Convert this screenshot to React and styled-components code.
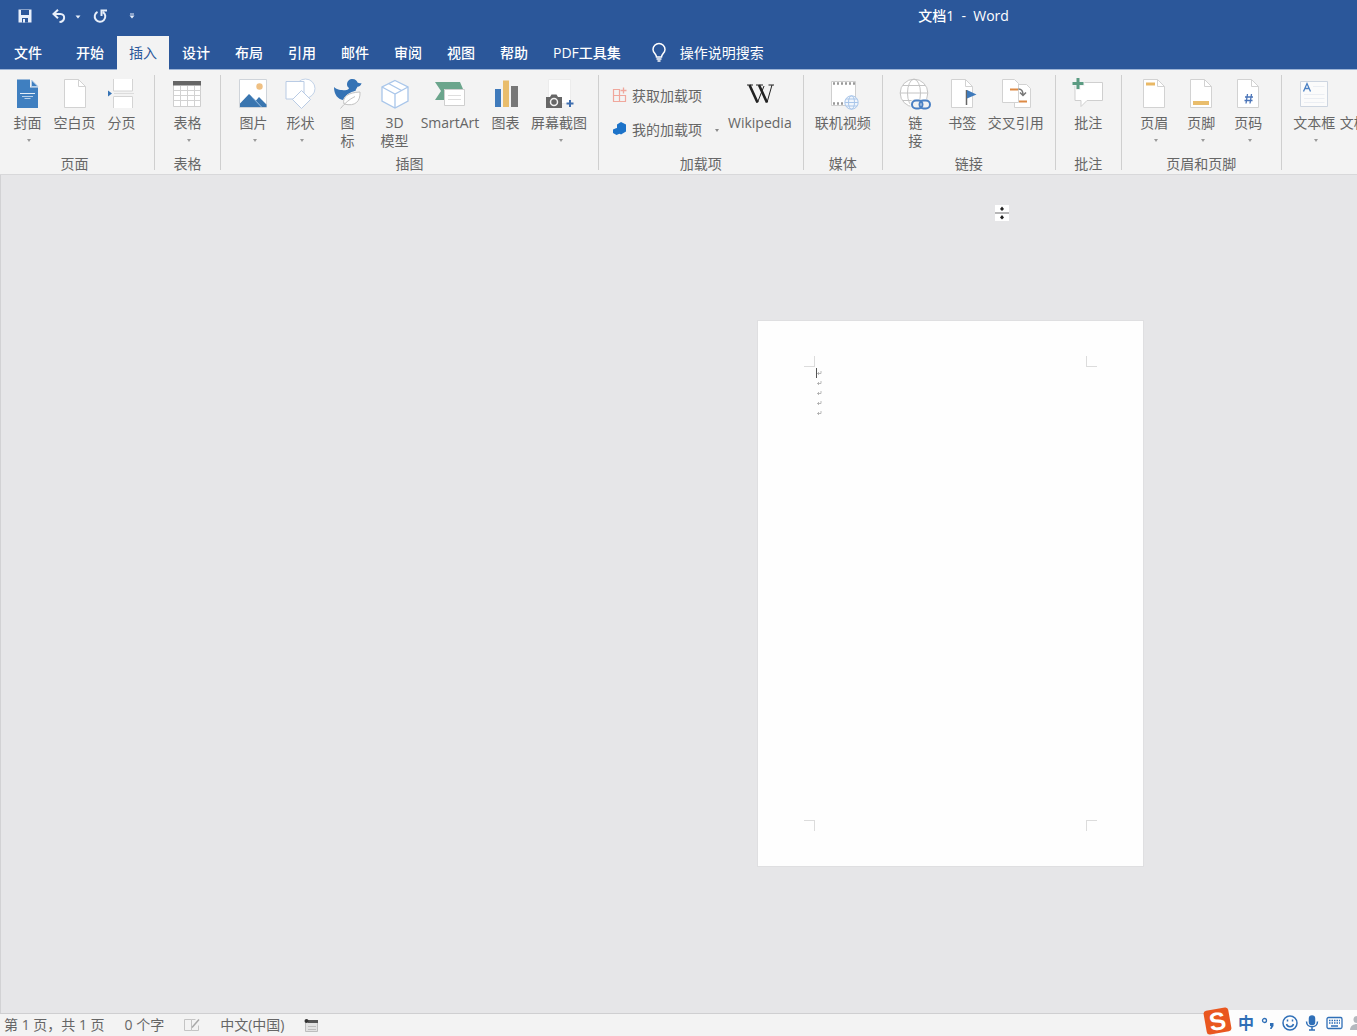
import React from "react";
import styled, { createGlobalStyle, css } from "styled-components";

const GlobalStyle = createGlobalStyle`
  * {
    box-sizing: border-box;
  }
  body {
    margin: 0;
    font-family: "Open Sans", "Noto Sans CJK SC", sans-serif;
    font-size: 14px;
    color: #666;
  }
  button {
    border: 0;
    padding: 0;
    background: none;
    font: inherit;
    color: inherit;
    cursor: pointer;
  }
  svg {
    display: block;
    flex: none;
  }
`;

const Window = styled.div`
  min-height: 100vh;
  display: flex;
  flex-direction: column;
  overflow: hidden;
  position: relative;
`;

/* ---------- title bar and tabs ---------- */

const TitleBar = styled.header`
  height: 36px;
  display: flex;
  align-items: center;
  padding: 0 0 5px 18px;
  background: #2b579a;
  color: #fff;
`;

const QuickAccess = styled.div`
  display: flex;
  align-items: center;
`;

const QuickButton = styled.button`
  margin-right: ${(props) => props.$gap}px;
`;

const DocTitle = styled.div`
  margin-left: auto;
  margin-right: 26%;
  line-height: 20px;
  font-weight: 500;
  white-space: pre;
`;

const TabBar = styled.nav`
  height: 34px;
  display: flex;
  background: #2b579a;
  border-bottom: 1px solid #9db4d6;
  color: #fff;
`;

const Tab = styled.button`
  height: 34px;
  padding: 0 12px 2px;
  margin-right: 1px;
  font-weight: 500;
  white-space: nowrap;

  ${(props) =>
    props.$file &&
    css`
      padding: 0 14px 2px;
      margin-right: 8px;
    `}

  ${(props) =>
    props.$active &&
    css`
      background: #f3f3f3;
      color: #2b579a;
      font-weight: 400;
    `}
`;

const TellMe = styled.button`
  display: flex;
  align-items: center;
  gap: 14px;
  margin-left: 18px;
  padding-bottom: 2px;
  white-space: nowrap;
`;

/* ---------- ribbon ---------- */

const Ribbon = styled.section`
  display: flex;
  padding: 5px 0 4px;
  background: #f3f3f3;
  border-bottom: 1px solid #d8d8da;
  overflow: hidden;
`;

const Group = styled.div`
  flex: none;
  display: flex;
  flex-direction: column;
  justify-content: space-between;
  padding: 3px 9px 0;
  border-right: 1px solid #cfcfcf;

  &:first-child {
    padding-left: 4px;
  }
`;

const GroupItems = styled.div`
  display: flex;
  align-items: flex-start;
`;

const GroupName = styled.div`
  height: 12px;
  line-height: 12px;
  text-align: center;
`;

const Tool = styled.button`
  min-width: ${(props) => (props.$wide ? 64 : 47)}px;
  height: 80px;
  padding: 0 2px;
  display: flex;
  flex-direction: column;
  align-items: center;
`;

const ToolLabel = styled.span`
  margin-top: 4px;
  line-height: 18px;
  white-space: pre;
`;

const DropMark = styled.span`
  margin: 7px 0 0 3px;
  border: 2px solid transparent;
  border-top: 3px solid #9a9a9a;
`;

const AddinList = styled.div`
  display: flex;
  flex-direction: column;
  padding-right: 7px;
`;

const Addin = styled.button`
  height: 34px;
  padding-left: 4px;
  display: flex;
  align-items: center;
  gap: 4px;
`;

const AddinMark = styled.span`
  margin: 4px 0 0 9px;
  border: 2px solid transparent;
  border-top: 3px solid #8a8a8a;
`;

/* ---------- document ---------- */

const Canvas = styled.main`
  flex: 1;
  display: flex;
  justify-content: flex-end;
  align-items: flex-start;
  padding: 146px 214px 40px 0;
  background: #e6e6e8;
  border-left: 1px solid #d2d2d4;
  position: relative;
`;

const Page = styled.article`
  width: 385px;
  height: 545px;
  padding: 46px 57px;
  background: #fefefe;
  outline: 1px solid #dfdfe1;
`;

const TextArea = styled.div`
  height: 100%;
  position: relative;
  padding: 1px;
`;

const Corner = styled.span`
  position: absolute;
  width: 11px;
  height: 11px;
  border: 0 solid #dcdcdc;
  ${(props) => props.$v}: -11px;
  ${(props) => props.$h}: -11px;
  border-${(props) => (props.$v === "top" ? "bottom" : "top")}-width: 1px;
  border-${(props) => (props.$h === "left" ? "right" : "left")}-width: 1px;
`;

const Paragraph = styled.div`
  height: 10px;
  display: flex;
  align-items: center;
  border-left: 1px solid ${(props) => (props.$caret ? "#555" : "transparent")};
`;

const Pointer = styled.svg`
  position: absolute;
  top: 29px;
  right: 347px;
`;

/* ---------- status bar ---------- */

const StatusBar = styled.footer`
  height: 23px;
  display: flex;
  align-items: center;
  padding-left: 4px;
  gap: 20px;
  background: #f3f3f3;
  border-top: 1px solid #cfcfd1;
  white-space: nowrap;
  line-height: 20px;
`;

const ImeBar = styled.div`
  position: absolute;
  right: 0;
  bottom: 0;
  width: 142px;
  height: 26px;
  padding-left: 23px;
  display: flex;
  align-items: center;
  gap: 7px;
  background: #fdfdfd;
  color: #2f6fb7;
  overflow: hidden;
`;

const ImeLang = styled.button`
  font-size: 16px;
  font-weight: 700;
  line-height: 20px;
`;

const ImeLogo = styled.div`
  position: absolute;
  right: 127px;
  bottom: 3px;
  width: 25px;
  height: 24px;
  border-radius: 3px;
  background: #e9571f;
  color: #fff;
  font: 700 25px/24px "Liberation Sans", sans-serif;
  text-align: center;
  transform: rotate(-10deg);
  z-index: 1;
`;

/* ---------- icons ---------- */

const Icon = ({ children }) => (
  <svg width="32" height="32" viewBox="0 0 32 32" fill="none">
    {children}
  </svg>
);

const Sheet = ({ children }) => (
  <Icon>
    <path d="M5.500 1.500h14l7 7v21h-21z" fill="#fff" stroke="#d2d2d2" />
    <path d="M19.500 1.500v7h7" stroke="#d2d2d2" />
    {children}
  </Icon>
);

const CoverIcon = () => (
  <Icon>
    <path d="M5 1.500h13v8h8V30H5z" fill="#3f7fc0" />
    <path d="M19.500 2v6.500H26z" fill="#3f7fc0" stroke="#b9d1ea" />
    <path d="M8 15.500h15" stroke="#e4eef8" />
    <path d="M10 18.500h11M12.500 20.500h6" stroke="#b9d1ea" />
  </Icon>
);

const BreakIcon = () => (
  <Icon>
    <path d="M7 1h20v12H7z" fill="#fff" />
    <path d="M7.500 1v12h19V1" stroke="#d4d4d4" />
    <path d="M7 18h20v12H7z" fill="#fff" />
    <path d="M7.500 30V18.500h19V30" stroke="#d4d4d4" />
    <path d="M2 12.500l4 3-4 3z" fill="#3573b5" />
    <path d="M8 15.500h20" stroke="#dcdcdc" />
  </Icon>
);

const TableIcon = () => (
  <Icon>
    <path d="M1.500 3.500h27v25h-27z" fill="#fff" stroke="#cfcfcf" />
    <path d="M1 3h28v4.500H1z" fill="#666" />
    <path
      d="M1.500 12.500h27M1.500 17.500h27M1.500 22.500h27M8.500 8v20M15.500 8v20M22.500 8v20"
      stroke="#d2d2d2"
    />
  </Icon>
);

const PictureIcon = () => (
  <Icon>
    <path d="M1.500 1.500h27v28h-27z" fill="#fff" stroke="#cfd4da" />
    <circle cx="21.500" cy="8.500" r="3.200" fill="#efc083" />
    <path d="M2 29v-3.500L11 16l7 6.500 3-3.500 7.500 7.500V29z" fill="#3a76b0" />
    <path d="M13.500 18.500l10 10.500" stroke="#9cc0e2" />
  </Icon>
);

const ShapesIcon = () => (
  <Icon>
    <circle cx="20.500" cy="10.500" r="9.500" fill="#fff" stroke="#c3d3e8" />
    <path d="M1 3.500h18V21H1z" fill="#fff" stroke="#b9cbe4" />
    <path d="M16.500 12.500l9 9-9 9-9-9z" fill="#fff" stroke="#b9cbe4" />
  </Icon>
);

const DuckIcon = () => (
  <Icon>
    <path
      d="M15 6.500C15 3 17.500 1 20.500 1S25 3 25.500 4.500c1.500.8 2.800.8 4 .5-.5 2.500-2 3.700-4 3.800-.8 1.700-2 2.700-2 4.200C22 13 14 15 11 22 6 21 2 17 2 9c3 3 7 3.200 11 3.200 2.500 0 4-1.200 4-2.200-1.300-.7-2-2-2-3.500z"
      fill="#3573b5"
    />
    <path
      d="M12 26c-2-7 4-11.500 16-12 .5 9-4.500 15-16 12z"
      fill="#fff"
      stroke="#c2c2c2"
    />
    <path d="M8.500 30.500C13 25 17 21.500 23 18.500" stroke="#c2c2c2" />
  </Icon>
);

const CubeIcon = () => (
  <Icon>
    <path
      d="M16 2.500l13 6.500v14l-13 7-13-7V9z"
      fill="#fff"
      stroke="#a9c6ea"
      strokeWidth="1.300"
    />
    <path d="M3 9l13 7 13-7M16 16v14M9.500 5.500l13 7" stroke="#a9c6ea" strokeWidth="1.300" />
  </Icon>
);

const SmartArtIcon = () => (
  <Icon>
    <path d="M1 4h25l3 7H10v11H1l6-9z" fill="#6ba58c" />
    <path d="M10.500 11.500h20v16h-20z" fill="#fff" stroke="#cfcfcf" />
    <path d="M14 17.500h13M14 21.500h13" stroke="#dedede" />
  </Icon>
);

const ChartIcon = () => (
  <Icon>
    <path d="M5 11h6v18H5z" fill="#3f7abb" />
    <path d="M13 2.500h6V29h-6z" fill="#e9bd6c" />
    <path d="M21 8h7v21h-7z" fill="#777" />
  </Icon>
);

const ScreenshotIcon = () => (
  <Icon>
    <path d="M5.500 1.500h22v24h-22z" fill="#fff" stroke="#ececec" />
    <path d="M3 19h4l1.500-2.500h5L15 19h4v11H3z" fill="#666" />
    <circle cx="11" cy="24" r="3.500" stroke="#f3f3f3" strokeWidth="1.500" />
    <path d="M27 22v7M23.500 25.500h7" stroke="#3f6fb0" strokeWidth="2" />
  </Icon>
);

/* the W of Wikipedia: two crossed Vs with serifs */
const WikiIcon = () => (
  <Icon>
    <g stroke="#222">
      <path d="M5.500 7l8 17.500M15 7l8 17.500" strokeWidth="2.600" />
      <path d="M13.500 24.500L20 8M23 24.500L28 7" strokeWidth="1" />
      <path d="M3 7h6M12 7h7M24.500 7h5.500" strokeWidth="1.200" />
    </g>
  </Icon>
);

const VideoIcon = () => (
  <Icon>
    <path d="M4.500 3.500h24v24h-24z" fill="#fff" stroke="#cfcfcf" />
    <path d="M6 5.500h22M6 25.500h12" stroke="#999" strokeWidth="2.500" strokeDasharray="2 2" />
    <circle cx="24.500" cy="24.500" r="6.700" fill="#f1f6fc" stroke="#a9c6ea" />
    <ellipse cx="24.500" cy="24.500" rx="3" ry="6.700" stroke="#a9c6ea" />
    <path d="M18 24.500h13M19 21h11M19 28h11" stroke="#a9c6ea" />
  </Icon>
);

const LinkIcon = () => (
  <Icon>
    <circle cx="15" cy="15" r="13.800" fill="#fff" stroke="#c4c4c4" />
    <ellipse cx="15" cy="15" rx="6.500" ry="13.800" stroke="#c4c4c4" />
    <path d="M1 15h28M4 7.500h22M4 22.500h22" stroke="#c4c4c4" />
    <rect x="11" y="21" width="21" height="11" rx="5" fill="#f3f3f3" />
    <g stroke="#4a80c4" strokeWidth="2">
      <rect x="13" y="22.500" width="10.500" height="8" rx="4" />
      <rect x="20.500" y="22.500" width="10.500" height="8" rx="4" />
    </g>
  </Icon>
);

const BookmarkIcon = () => (
  <Sheet>
    <path d="M20.500 12v15" stroke="#666" strokeWidth="1.500" />
    <path d="M21 12l9.500 4.500-9.500 4z" fill="#3f7abb" />
  </Sheet>
);

const CrossRefIcon = () => (
  <Icon>
    <path d="M14.500 6.500h12l4 4v19h-16z" fill="#fff" stroke="#d2d2d2" />
    <path d="M2.500 1.500h12l4 4v19h-16z" fill="#fff" stroke="#d2d2d2" />
    <path d="M10 11.500h8M19 23.500h8" stroke="#dd8a45" strokeWidth="2" />
    <path d="M18.500 11c3 0 4.500 2 4.500 6M20 14.500l3 3 3-3" stroke="#777" strokeWidth="1.500" />
  </Icon>
);

const CommentIcon = () => (
  <Icon>
    <path d="M3 4.500h27.500v18H15l-6 6v-6H3z" fill="#fff" stroke="#cfcfcf" />
    <path d="M6 0v12M0 5.500h12.500" stroke="#f3f3f3" strokeWidth="5" />
    <path d="M6 0v11M.5 5.500h11" stroke="#5b9b82" strokeWidth="3" />
  </Icon>
);

const HeaderIcon = () => (
  <Sheet>
    <path d="M8 4.500h9v3H8z" fill="#e9b865" />
  </Sheet>
);

const FooterIcon = () => (
  <Sheet>
    <path d="M8 23h16v4H8z" fill="#e9bd6c" />
  </Sheet>
);

const PageNumberIcon = () => (
  <Sheet>
    <path
      d="M15.500 16l-1.500 9.500M19.500 16L18 25.500M13 19h8M12.500 22.500h8"
      stroke="#4a74b8"
      strokeWidth="1.300"
    />
  </Sheet>
);

const TextBoxIcon = () => (
  <Icon>
    <path d="M2.500 3.500h27v25h-27z" fill="#fbfbfb" stroke="#cdd5e0" />
    <path d="M5.500 13.500l3.500-8 3.500 8M6.500 10.500h5" stroke="#4a80c4" strokeWidth="1.300" />
    <path d="M15 8.500h11.500M6 16.500h20.500M6 20.500h20.500M6 24.500h20.500" stroke="#ebeef3" />
  </Icon>
);

const PartsIcon = () => (
  <Icon>
    <path d="M5.500 1.500h22v28h-22z" fill="#fff" stroke="#e5b878" />
  </Icon>
);

const GetAddinsIcon = () => (
  <svg width="16" height="16" viewBox="0 0 16 16" fill="none" stroke="#f0a79c">
    <path d="M1.500 2.500h6v6h-6zM1.500 8.500h6v6h-6zM7.500 8.500h6v6h-6z" strokeWidth="1.200" />
    <path d="M11.500 .5v6M8.500 3.500h6" strokeWidth="1.300" />
  </svg>
);

const MyAddinsIcon = () => (
  <svg width="16" height="16" viewBox="0 0 16 16">
    <path d="M9 1l5 2.500v7L9 13.500l-4-2.500V3.500z" fill="#1c73c9" />
    <path d="M1 8.500L4.500 7 8 8.500v4L4.500 14 1 12z" fill="#1c73c9" />
  </svg>
);

const SaveIcon = () => (
  <svg width="14" height="14" viewBox="0 0 14 14">
    <path d="M.5.5h13v13H.5z" fill="#e8effa" />
    <path d="M3 1h8v5H3zM4 9h6v4.500H4z" fill="#2b579a" />
    <path d="M5 10h2v3.500H5z" fill="#e8effa" />
  </svg>
);

const UndoIcon = () => (
  <svg width="14" height="14" viewBox="0 0 14 14" fill="none" stroke="#e8effa" strokeWidth="2">
    <path d="M6 .8L1.500 5 6 9.200M2 5h6.500c5 0 5 7.500-1 8" />
  </svg>
);

const RedoIcon = () => (
  <svg width="14" height="14" viewBox="0 0 14 14" fill="none" stroke="#e8effa" strokeWidth="2">
    <path d="M4.500 2.800a5.300 5.300 0 1 0 5.500.3M8.500 7V1.500H14" />
  </svg>
);

const DownMark = ({ line }) => (
  <svg width="6" height="8" viewBox="0 0 6 8" fill="#e8effa">
    {line && <path d="M1 1.500h4v1H1z" />}
    <path d="M.5 3.500h5L3 6.500z" />
  </svg>
);

const BulbIcon = () => (
  <svg width="14" height="20" viewBox="0 0 14 20" fill="none" stroke="#fff" strokeWidth="1.500">
    <path d="M4.500 15c0-3-3.500-4-3.500-7.500a6 6 0 0 1 12 0C13 11 9.500 12 9.500 15z" />
    <path d="M4.500 17h5M5.500 19h3" />
  </svg>
);

const ReturnMark = () => (
  <svg width="6" height="6" viewBox="0 0 6 6" fill="none" stroke="#aaa">
    <path d="M4 1v2.500H0M1.500 2v3" strokeWidth=".8" />
  </svg>
);

const ProofIcon = () => (
  <svg width="16" height="14" viewBox="0 0 16 14" fill="none" stroke="#c4c4c4">
    <path d="M7.500 12.500h-7v-11h7zM7.500 1.500h4M7.500 12.500h7v-5" />
    <path d="M8 9.500l7-8" stroke="#a8a8a8" strokeWidth="1.500" />
  </svg>
);

const MacroIcon = () => (
  <svg width="14" height="14" viewBox="0 0 14 14" fill="none">
    <path d="M1.500 3.500h12v10h-12z" fill="#e2e2e2" stroke="#bdbdbd" />
    <path d="M4 2h10v3H4z" fill="#555" />
    <circle cx="2.500" cy="3" r="2" fill="#333" />
    <path d="M4 8.500h8M4 11.500h8" stroke="#bdbdbd" />
  </svg>
);

const PunctIcon = () => (
  <svg width="14" height="14" viewBox="0 0 14 14" fill="none">
    <circle cx="3.500" cy="4.500" r="2" stroke="#2f6fb7" strokeWidth="1.300" />
    <path d="M9 7h3.500v3L10.500 13H9l1-3H9z" fill="#2f6fb7" />
  </svg>
);

const SmileIcon = () => (
  <svg width="16" height="16" viewBox="0 0 16 16" fill="none" stroke="#2f6fb7" strokeWidth="1.500">
    <circle cx="8" cy="8" r="7" />
    <path d="M4.500 9c1 3.500 6 3.500 7 0M5.500 4.500v2M10.500 4.500v2" />
  </svg>
);

const MicIcon = () => (
  <svg width="14" height="16" viewBox="0 0 14 16" fill="none" stroke="#2f6fb7" strokeWidth="1.500">
    <rect x="4.500" y="1" width="5" height="8.500" rx="2.500" fill="#2f6fb7" />
    <path d="M1.500 6.500c0 7 11 7 11 0M7 12v3M4 15h6" />
  </svg>
);

const KeyboardIcon = () => (
  <svg width="17" height="14" viewBox="0 0 17 14" fill="none" stroke="#2f6fb7">
    <rect x="1" y="1.500" width="15" height="11" rx="1.500" strokeWidth="1.300" />
    <path d="M3 4.500h11M3 7h11" strokeWidth="1.500" strokeDasharray="1.500 1" />
    <path d="M5 10h7" strokeWidth="1.500" />
  </svg>
);

const UserIcon = () => (
  <svg width="14" height="16" viewBox="0 0 14 16" fill="#b4b8be">
    <circle cx="7" cy="4.500" r="3.500" />
    <path d="M0 15c0-8 14-8 14 0z" />
  </svg>
);

/* ---------- data ---------- */

const tabs = ["开始", "插入", "设计", "布局", "引用", "邮件", "审阅", "视图", "帮助", "PDF工具集"];

const groupsBefore = [
  {
    name: "页面",
    tools: [
      { label: "封面", icon: <CoverIcon />, drop: true },
      { label: "空白页", icon: <Sheet /> },
      { label: "分页", icon: <BreakIcon /> },
    ],
  },
  { name: "表格", tools: [{ label: "表格", icon: <TableIcon />, drop: true }] },
  {
    name: "插图",
    tools: [
      { label: "图片", icon: <PictureIcon />, drop: true },
      { label: "形状", icon: <ShapesIcon />, drop: true },
      { label: "图\n标", icon: <DuckIcon /> },
      { label: "3D\n模型", icon: <CubeIcon /> },
      { label: "SmartArt", icon: <SmartArtIcon />, wide: true },
      { label: "图表", icon: <ChartIcon /> },
      { label: "屏幕截图", icon: <ScreenshotIcon />, drop: true },
    ],
  },
];

const groupsAfter = [
  { name: "媒体", tools: [{ label: "联机视频", icon: <VideoIcon /> }] },
  {
    name: "链接",
    tools: [
      { label: "链\n接", icon: <LinkIcon /> },
      { label: "书签", icon: <BookmarkIcon /> },
      { label: "交叉引用", icon: <CrossRefIcon /> },
    ],
  },
  { name: "批注", tools: [{ label: "批注", icon: <CommentIcon /> }] },
  {
    name: "页眉和页脚",
    tools: [
      { label: "页眉", icon: <HeaderIcon />, drop: true },
      { label: "页脚", icon: <FooterIcon />, drop: true },
      { label: "页码", icon: <PageNumberIcon />, drop: true },
    ],
  },
  {
    name: "",
    tools: [
      { label: "文本框", icon: <TextBoxIcon />, drop: true },
      { label: "文档部件", icon: <PartsIcon /> },
    ],
  },
];

const ToolButton = ({ label, icon, drop, wide }) => (
  <Tool $wide={wide}>
    {icon}
    <ToolLabel>{label}</ToolLabel>
    {drop && <DropMark />}
  </Tool>
);

const RibbonGroup = ({ name, tools }) => (
  <Group>
    <GroupItems>
      {tools.map((tool) => (
        <ToolButton key={tool.label} {...tool} />
      ))}
    </GroupItems>
    <GroupName>{name}</GroupName>
  </Group>
);

const App = () => {
  return (
    <Window>
      <GlobalStyle />
      <TitleBar>
        <QuickAccess>
          <QuickButton $gap={20} aria-label="保存">
            <SaveIcon />
          </QuickButton>
          <QuickButton $gap={9} aria-label="撤消">
            <UndoIcon />
          </QuickButton>
          <QuickButton $gap={12} aria-label="撤消选项">
            <DownMark />
          </QuickButton>
          <QuickButton $gap={22} aria-label="重复">
            <RedoIcon />
          </QuickButton>
          <QuickButton $gap={0} aria-label="自定义">
            <DownMark line />
          </QuickButton>
        </QuickAccess>
        <DocTitle>{"文档1  -  Word"}</DocTitle>
      </TitleBar>

      <TabBar>
        <Tab $file>文件</Tab>
        {tabs.map((tab) => (
          <Tab key={tab} $active={tab === "插入"}>
            {tab}
          </Tab>
        ))}
        <TellMe>
          <BulbIcon />
          操作说明搜索
        </TellMe>
      </TabBar>

      <Ribbon>
        {groupsBefore.map((group) => (
          <RibbonGroup key={group.name} {...group} />
        ))}
        <Group>
          <GroupItems>
            <AddinList>
              <Addin>
                <GetAddinsIcon />
                获取加载项
              </Addin>
              <Addin>
                <MyAddinsIcon />
                我的加载项
                <AddinMark />
              </Addin>
            </AddinList>
            <ToolButton label="Wikipedia" icon={<WikiIcon />} />
          </GroupItems>
          <GroupName>加载项</GroupName>
        </Group>
        {groupsAfter.map((group) => (
          <RibbonGroup key={group.name} {...group} />
        ))}
      </Ribbon>

      <Canvas>
        <Pointer width="16" height="18" viewBox="0 0 16 18">
          <path d="M1 1h14v7H1zM1 10h14v7H1z" fill="#fff" />
          <path d="M1 9h14" stroke="#888" />
          <path d="M8 2.500l2 2.500-2 2-2-2zM8 11l2 2.500-2 2-2-2z" fill="#222" />
        </Pointer>
        <Page>
          <TextArea>
            <Corner $v="top" $h="left" />
            <Corner $v="top" $h="right" />
            <Corner $v="bottom" $h="left" />
            <Corner $v="bottom" $h="right" />
            {[0, 1, 2, 3, 4].map((line) => (
              <Paragraph key={line} $caret={line === 0}>
                <ReturnMark />
              </Paragraph>
            ))}
          </TextArea>
        </Page>
      </Canvas>

      <StatusBar>
        <span>第 1 页，共 1 页</span>
        <span>0 个字</span>
        <ProofIcon />
        <span>中文(中国)</span>
        <MacroIcon />
      </StatusBar>
      <ImeLogo>S</ImeLogo>
      <ImeBar>
        <ImeLang>中</ImeLang>
        <PunctIcon />
        <SmileIcon />
        <MicIcon />
        <KeyboardIcon />
        <UserIcon />
      </ImeBar>
    </Window>
  );
};

export default App;
